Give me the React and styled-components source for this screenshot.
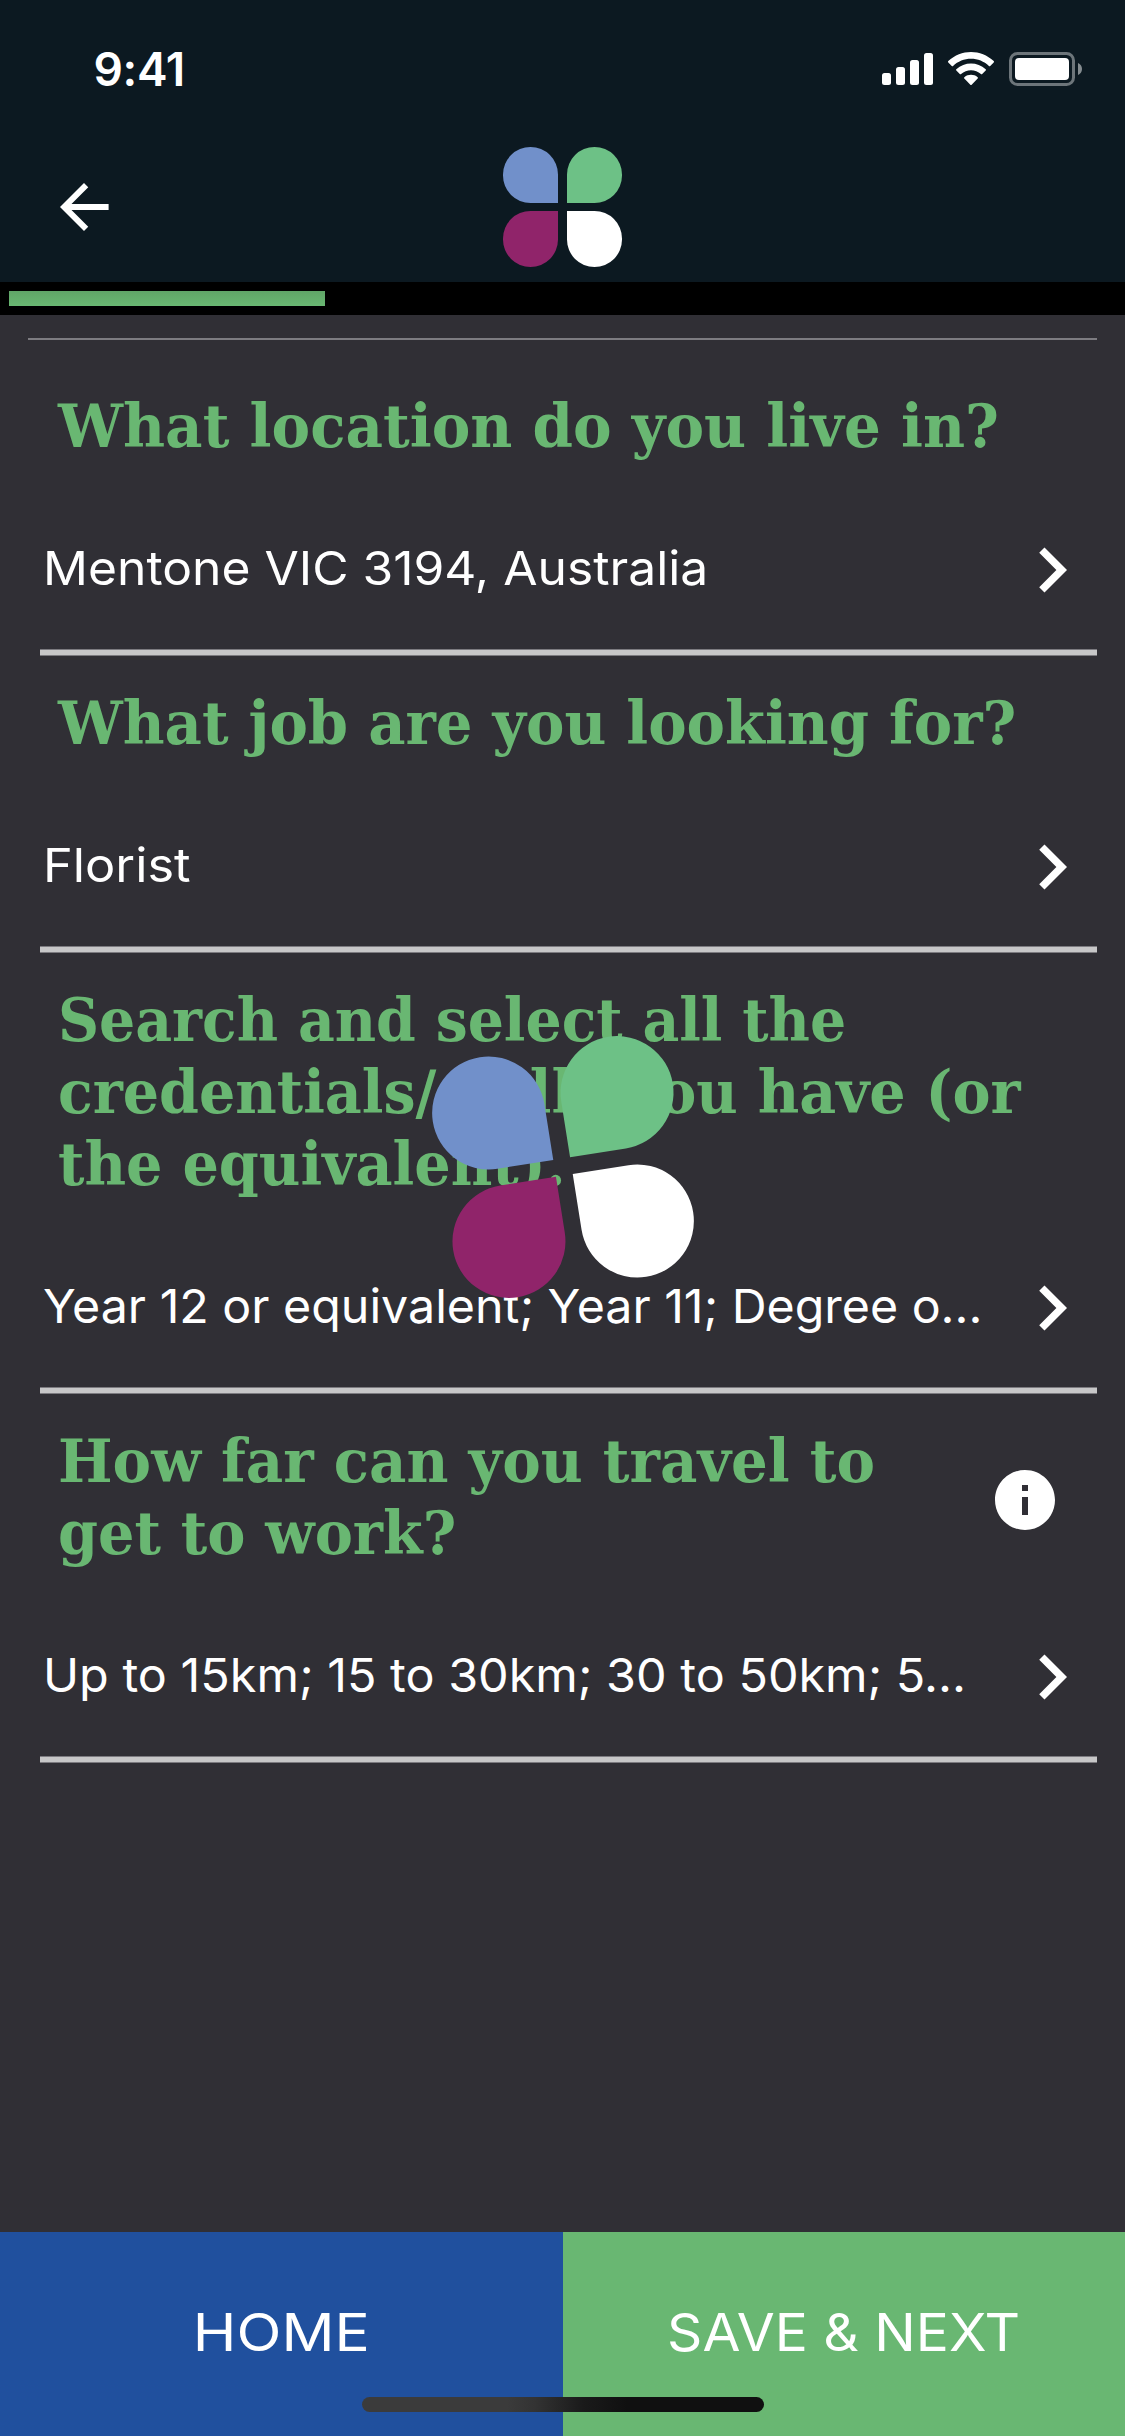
import React from "react";
import styled, { createGlobalStyle } from "styled-components";

const GlobalStyle = createGlobalStyle`
  *, *::before, *::after { box-sizing: border-box; }
  body { margin: 0; background: #302f35; }
`;

const Screen = styled.div`
  position: relative;
  display: flex;
  flex-direction: column;
  width: 1125px;
  height: 2436px;
  overflow: hidden;
  background: #302f35;
  color: #fff;
  font-family: Inter, "Liberation Sans", sans-serif;
`;

const Header = styled.header`
  flex: none;
  background: #0c1921;
`;

const StatusBar = styled.div`
  display: flex;
  align-items: center;
  justify-content: space-between;
  height: 132px;
  padding: 6px 43px 0 93.5px;
`;

const Clock = styled.span`
  font-size: 46px;
  font-weight: 600;
  line-height: 56px;
  letter-spacing: -0.3px;
`;

const StatusIcons = styled.div`
  display: flex;
  align-items: center;
  gap: 15px;

  svg { display: block; }
`;

const NavBar = styled.div`
  display: grid;
  grid-template-columns: 72px 1fr 72px;
  align-items: center;
  justify-items: center;
  height: 150px;
  padding: 0 48px;
`;

const IconButton = styled.button`
  display: flex;
  flex: none;
  padding: 0;
  border: 0;
  background: none;
  color: inherit;

  svg { display: block; }
`;

const ProgressTrack = styled.div`
  flex: none;
  height: 33px;
  padding: 9px;
  background: #000;
`;

const ProgressFill = styled.div`
  width: 316px;
  height: 15px;
  background: linear-gradient(#60a567, #69b772);
`;

const Content = styled.main`
  flex: 1;
  padding: 23px 28px 0;
`;

const TopRule = styled.hr`
  height: 2px;
  margin: 0 0 19px;
  border: 0;
  background: #7d7c81;
`;

const Question = styled.section`
  margin-left: 12px;
`;

const QuestionRule = styled.hr`
  height: 7px;
  margin: 0;
  border: solid #7c7b80;
  border-width: 1px 0;
  background: #c7c7c8;
`;

const QuestionHead = styled.div`
  display: flex;
  align-items: center;
  justify-content: space-between;
  padding: 31px 42px 29px 17.5px;
`;

const Title = styled.h2`
  margin: 0;
  color: #69b772;
  font: bold 60px/72px "DejaVu Serif", "Liberation Serif", serif;
  white-space: nowrap;
`;

const TitleLine = styled.span`
  display: block;
  transform: scaleX(${(p) => p.$stretch});
  transform-origin: left;
`;

const InfoButton = styled(IconButton)`
  margin-top: 6px;
  margin-right: -6px;
`;

const AnswerRow = styled.div`
  display: flex;
  align-items: center;
  justify-content: space-between;
  height: 158px;
  padding-left: 3px;
`;

const Answer = styled.span`
  padding-bottom: 4px;
  font-size: 47px;
  line-height: 60px;
  white-space: nowrap;
  transform: scaleX(${(p) => p.$stretch});
  transform-origin: left;
`;

const Footer = styled.footer`
  display: grid;
  grid-template-columns: 1fr 1fr;
  flex: none;
  height: 204px;
`;

const FooterButton = styled.button`
  padding: 0 0 2px;
  border: 0;
  background: ${(p) => p.$color};
  color: #fff;
  font: 400 52px/64px Inter, "Liberation Sans", sans-serif;
`;

const FooterLabel = styled.span`
  display: inline-block;
  transform: scaleX(${(p) => p.$stretch});
`;

const HomeIndicator = styled.div`
  position: absolute;
  bottom: 24px;
  left: 50%;
  width: 402px;
  height: 15px;
  border-radius: 7.5px;
  background: linear-gradient(90deg, #3b3b3b 36%, #333 43%, #1a1a1a 55%, #101010 66%);
  transform: translateX(-50%);
`;

const Loader = styled.div`
  position: absolute;
  top: 1166.5px;
  left: 562.5px;
  transform: translate(-50%, -50%) rotate(-9deg);
`;

const PetalGrid = styled.div`
  display: grid;
  grid-template-columns: repeat(2, ${(p) => p.$petal}px);
  gap: ${(p) => p.$gap}px;
`;

const Petal = styled.span`
  aspect-ratio: 1;
  background: ${(p) => p.$color};
  border-radius: ${(p) => p.$radius};
`;

function Clover({ petal, gap }) {
  return (
    <PetalGrid $petal={petal} $gap={gap}>
      <Petal $color="#7190ca" $radius="50% 50% 0 50%" />
      <Petal $color="#6dc186" $radius="50% 50% 50% 0" />
      <Petal $color="#90246a" $radius="50% 0 50% 50%" />
      <Petal $color="#fff" $radius="0 50% 50% 50%" />
    </PetalGrid>
  );
}

function Signal() {
  return (
    <svg width="51" height="34" viewBox="0 0 51 34" fill="#fff">
      <rect x="0" y="21" width="9" height="12" rx="2.5" />
      <rect x="14" y="15" width="9" height="18" rx="2.5" />
      <rect x="28" y="8" width="9" height="25" rx="2.5" />
      <rect x="42" y="1" width="9" height="32" rx="2.5" />
    </svg>
  );
}

function Wifi() {
  return (
    <svg width="46" height="34" viewBox="0 0 15.333 11.333" fill="#fff">
      <path d="M7.667 2.28C9.892 2.28 12.032 3.135 13.644 4.668C13.765 4.786 13.959 4.785 14.079 4.665L15.239 3.497C15.3 3.436 15.334 3.354 15.333 3.268C15.333 3.182 15.298 3.1 15.237 3.039C11.005-1.013 4.328-1.013.096 3.039C.035 3.1 0 3.182 0 3.268C-.001 3.354.033 3.436.094 3.497L1.254 4.665C1.374 4.785 1.568 4.786 1.689 4.668C3.301 3.135 5.441 2.28 7.667 2.28Z" />
      <path d="M7.667 6.08C8.889 6.08 10.068 6.534 10.974 7.355C11.096 7.471 11.289 7.468 11.409 7.349L12.567 6.181C12.628 6.12 12.662 6.037 12.661 5.95C12.66 5.864 12.625 5.781 12.562 5.722C9.804 3.16 5.532 3.16 2.773 5.722C2.711 5.781 2.676 5.864 2.675 5.951C2.674 6.037 2.708 6.12 2.769 6.181L3.926 7.349C4.046 7.468 4.239 7.471 4.362 7.355C5.267 6.535 6.445 6.08 7.667 6.08Z" />
      <path d="M9.984 8.638C9.986 8.724 9.952 8.808 9.89 8.868L7.888 10.886C7.829 10.945 7.75 10.979 7.667 10.979C7.584 10.979 7.504 10.945 7.446 10.886L5.443 8.868C5.381 8.807 5.347 8.724 5.349 8.637C5.351 8.551 5.388 8.469 5.453 8.411C6.731 7.329 8.602 7.329 9.88 8.411C9.945 8.469 9.982 8.552 9.984 8.638Z" />
    </svg>
  );
}

function Battery() {
  return (
    <svg width="73" height="34" viewBox="0 0 73 34" fill="none">
      <rect x="1.5" y="1.5" width="63" height="31" rx="7" stroke="#6d757a" strokeWidth="3" />
      <rect x="6" y="6" width="54" height="22" rx="4" fill="#fff" />
      <path d="M69 11v12c2.4-1 4-3.300 4-6s-1.600-5-4-6z" fill="#858c90" />
    </svg>
  );
}

function BackArrow() {
  return (
    <svg width="72" height="72" viewBox="0 0 24 24" fill="#fff">
      <path d="M20.200 11H7.830l5.590-5.590L12 4l-8 8 8 8 1.410-1.410L7.830 13H20.200z" />
    </svg>
  );
}

function Chevron() {
  return (
    <svg width="90" height="90" viewBox="0 0 24 24" fill="#fff">
      <path d="M10 6 8.590 7.410 13.170 12l-4.580 4.590L10 18l6-6z" />
    </svg>
  );
}

function Info() {
  return (
    <svg width="72" height="72" viewBox="0 0 24 24" fill="#fff">
      <path d="M12 2C6.480 2 2 6.480 2 12s4.480 10 10 10 10-4.480 10-10S17.520 2 12 2zm1 15h-2v-6h2v6zm0-8h-2V7h2v2z" />
    </svg>
  );
}

const questions = [
  {
    title: [["What location do you live in?", 0.965]],
    answer: "Mentone VIC 3194, Australia",
    stretch: 1.059,
  },
  {
    title: [["What job are you looking for?", 0.96]],
    answer: "Florist",
    stretch: 1.075,
  },
  {
    title: [
      ["Search and select all the", 0.948],
      ["credentials/skills you have (or", 0.951],
      ["the equivalent).", 0.954],
    ],
    answer: "Year 12 or equivalent; Year 11; Degree o...",
    stretch: 1.028,
  },
  {
    title: [
      ["How far can you travel to", 0.963],
      ["get to work?", 0.954],
    ],
    answer: "Up to 15km; 15 to 30km; 30 to 50km; 5...",
    stretch: 1.032,
    info: true,
  },
];

export default function App() {
  return (
    <Screen>
      <GlobalStyle />
      <Header>
        <StatusBar>
          <Clock>9:41</Clock>
          <StatusIcons>
            <Signal />
            <Wifi />
            <Battery />
          </StatusIcons>
        </StatusBar>
        <NavBar>
          <IconButton aria-label="Back">
            <BackArrow />
          </IconButton>
          <Clover petal={55.8} gap={8.4} />
        </NavBar>
      </Header>
      <ProgressTrack>
        <ProgressFill />
      </ProgressTrack>
      <Content>
        <TopRule />
        {questions.map((q) => (
          <Question key={q.answer}>
            <QuestionHead>
              <Title>
                {q.title.map(([text, stretch]) => (
                  <TitleLine key={text} $stretch={stretch}>
                    {text}
                  </TitleLine>
                ))}
              </Title>
              {q.info && (
                <InfoButton aria-label="More information">
                  <Info />
                </InfoButton>
              )}
            </QuestionHead>
            <AnswerRow>
              <Answer $stretch={q.stretch}>{q.answer}</Answer>
              <IconButton aria-label="Edit answer">
                <Chevron />
              </IconButton>
            </AnswerRow>
            <QuestionRule />
          </Question>
        ))}
      </Content>
      <Footer>
        <FooterButton $color="#20509e">
          <FooterLabel $stretch={1.13}>HOME</FooterLabel>
        </FooterButton>
        <FooterButton $color="#69b772">
          <FooterLabel $stretch={1.06}>SAVE &amp; NEXT</FooterLabel>
        </FooterButton>
      </Footer>
      <HomeIndicator />
      <Loader>
        <Clover petal={113} gap={17} />
      </Loader>
    </Screen>
  );
}
